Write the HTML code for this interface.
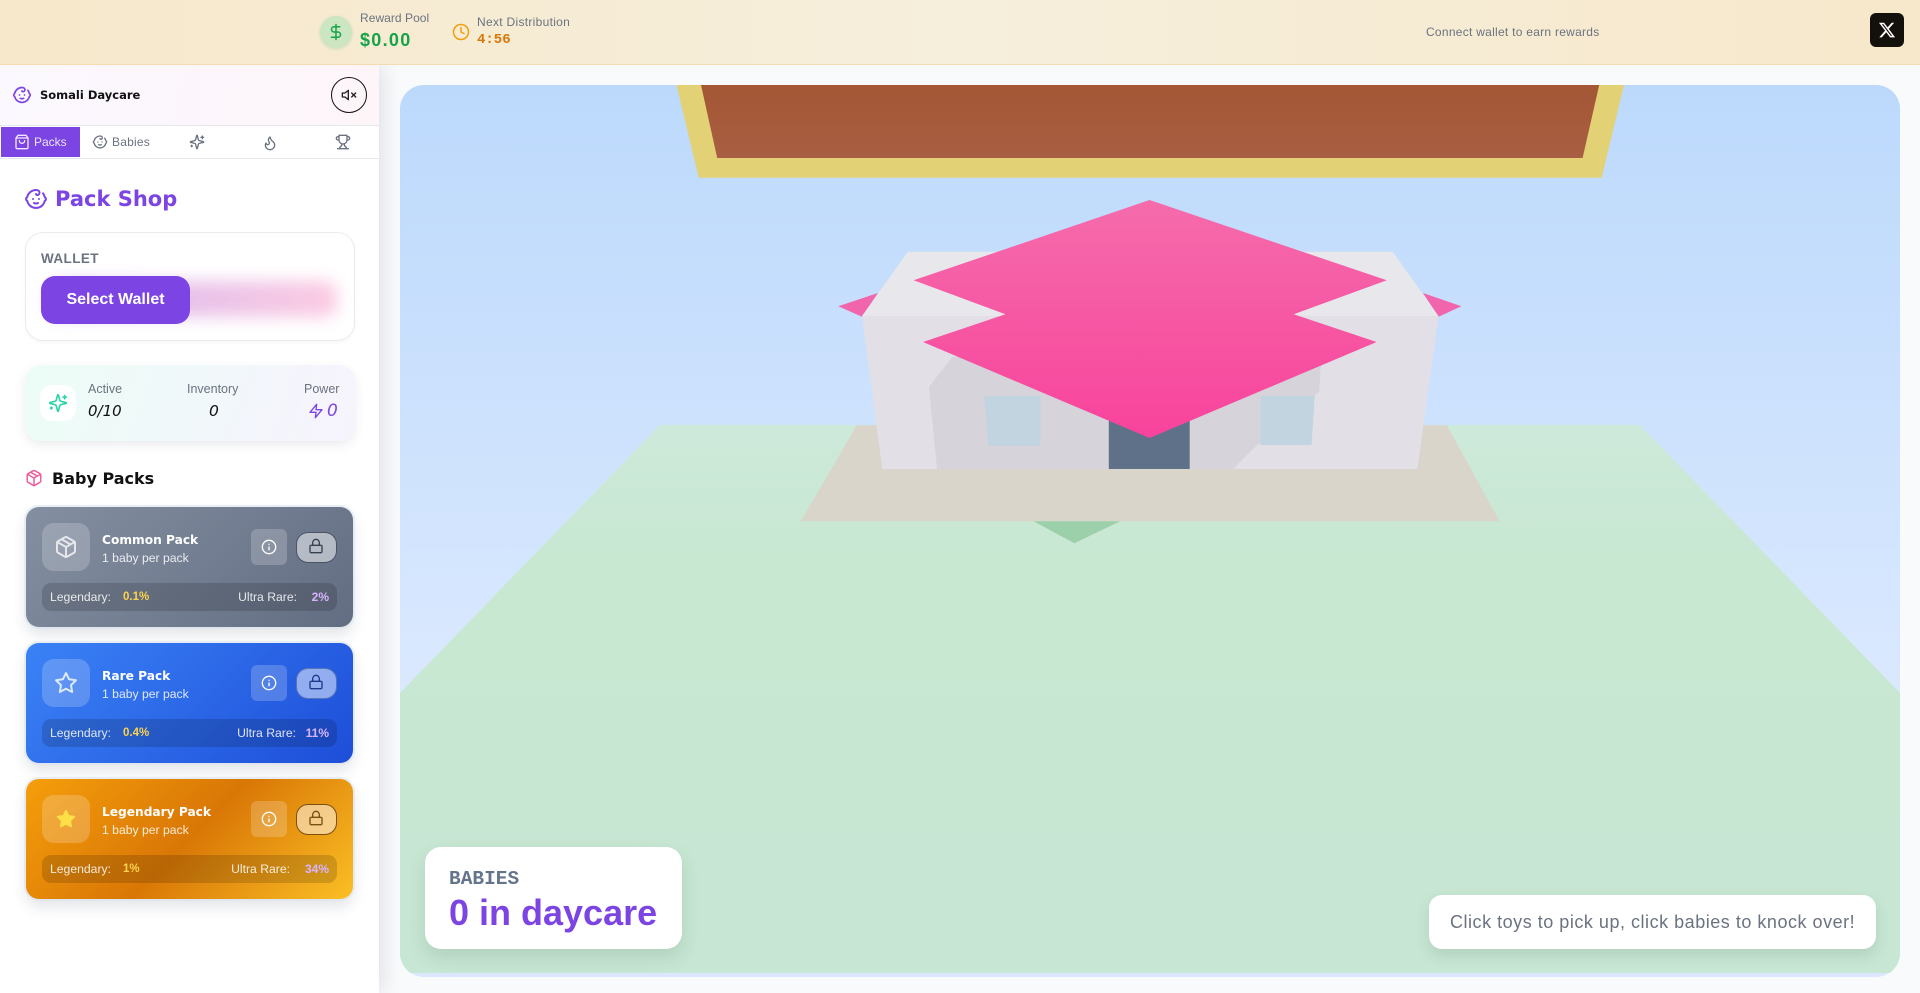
<!DOCTYPE html>
<html><head><meta charset="utf-8"><title>Somali Daycare</title>
<style>
*{box-sizing:border-box;margin:0;padding:0}
html,body{width:1920px;height:993px;overflow:hidden;background:#f8fafc;font-family:"Liberation Sans",sans-serif}
.a{position:absolute;white-space:nowrap}
svg.i{position:absolute;fill:none;stroke:currentColor;stroke-width:2;stroke-linecap:round;stroke-linejoin:round}
.h{font-family:"DejaVu Sans",sans-serif}
#top{left:0;top:0;width:1920px;height:65px;z-index:5;background:linear-gradient(90deg,#f7e8cb,#f6efdc 50%,#f7e8cb);border-bottom:1px solid #f4dcb0}
#side{left:0;top:65px;width:379px;height:928px;z-index:3;background:#fff;box-shadow:0 0 22px rgba(30,40,60,.16)}
#scene{left:400px;top:85px;width:1500px;height:892px;border-radius:24px;overflow:hidden;background:#dbe7ff}
.card{left:26px;width:327px;height:120px;border-radius:13px;box-shadow:0 0 0 2px rgba(220,228,240,.6),0 8px 14px rgba(60,70,90,.14)}
.ib{left:16px;top:16px;width:48px;height:48px;border-radius:12px;background:rgba(255,255,255,.2)}
.tt{left:76px;top:25px;font-size:12.2px;font-weight:700;color:#fff;line-height:16px}
.st{left:76px;top:44px;font-size:12.2px;color:rgba(255,255,255,.85);line-height:15px}
.inf{left:225px;top:22px;width:36px;height:36px;border-radius:6px;background:rgba(255,255,255,.2)}
.lk{left:270px;top:25px;width:41px;height:31px;border-radius:12px;background:rgba(255,255,255,.5);border:1px solid rgba(30,40,60,.7)}
.bar{left:16px;top:76px;width:295px;height:28px;border-radius:9px;background:rgba(0,0,0,.15);color:rgba(255,255,255,.85);font-size:12.2px;line-height:28px}
.y{color:#fcd34d;font-weight:700;font-size:11.5px}.p{color:#d8b4fe;font-weight:700;font-size:12px}
</style></head><body>
<svg width="0" height="0" style="position:absolute"><defs>
<symbol id="baby" viewBox="0 0 24 24"><path d="M9 12h.01"/><path d="M15 12h.01"/><path d="M10 16c.5.3 1.2.5 2 .5s1.5-.2 2-.5"/><path d="M19 6.3a9 9 0 0 1 1.8 3.9 2 2 0 0 1 0 3.6 9 9 0 0 1-17.6 0 2 2 0 0 1 0-3.6A9 9 0 0 1 12 3c2 0 3.5 1.1 3.5 2.5s-.9 2.5-2 2.5c-.8 0-1.5-.4-1.5-1"/></symbol>
<symbol id="bag" viewBox="0 0 24 24"><path d="M6 2 3 6v14a2 2 0 0 0 2 2h14a2 2 0 0 0 2-2V6l-3-4Z"/><path d="M3 6h18"/><path d="M16 10a4 4 0 0 1-8 0"/></symbol>
<symbol id="spark" viewBox="0 0 24 24"><path d="M9.937 15.5A2 2 0 0 0 8.5 14.063l-6.135-1.582a.5.5 0 0 1 0-.962L8.5 9.936A2 2 0 0 0 9.937 8.5l1.582-6.135a.5.5 0 0 1 .963 0L14.063 8.5A2 2 0 0 0 15.5 9.937l6.135 1.581a.5.5 0 0 1 0 .964L15.5 14.063a2 2 0 0 0-1.437 1.437l-1.582 6.135a.5.5 0 0 1-.963 0z"/><path d="M20 3v4"/><path d="M22 5h-4"/><path d="M4 17v2"/><path d="M5 18H3"/></symbol>
<symbol id="flame" viewBox="0 0 24 24"><path d="M8.5 14.5A2.5 2.5 0 0 0 11 12c0-1.38-.5-2-1-3-1.072-2.143-.224-4.054 2-6 .5 2.5 2 4.9 4 6.5 2 1.6 3 3.5 3 5.5a7 7 0 1 1-14 0c0-1.153.433-2.294 1-3a2.5 2.5 0 0 0 2.5 2.5z"/></symbol>
<symbol id="trophy" viewBox="0 0 24 24"><path d="M6 9H4.5a2.5 2.5 0 0 1 0-5H6"/><path d="M18 9h1.5a2.5 2.5 0 0 0 0-5H18"/><path d="M4 22h16"/><path d="M10 14.66V17c0 .55-.47.98-.97 1.21C7.85 18.75 7 20.24 7 22"/><path d="M14 14.66V17c0 .55.47.98.97 1.21C16.15 18.75 17 20.24 17 22"/><path d="M18 2H6v7a6 6 0 0 0 12 0V2Z"/></symbol>
<symbol id="pkg" viewBox="0 0 24 24"><path d="m7.5 4.27 9 5.15"/><path d="M21 8a2 2 0 0 0-1-1.73l-7-4a2 2 0 0 0-2 0l-7 4A2 2 0 0 0 3 8v8a2 2 0 0 0 1 1.73l7 4a2 2 0 0 0 2 0l7-4A2 2 0 0 0 21 16Z"/><path d="m3.3 7 8.7 5 8.7-5"/><path d="M12 22V12"/></symbol>
<symbol id="star" viewBox="0 0 24 24"><polygon points="12 2 15.09 8.26 22 9.27 17 14.14 18.18 21.02 12 17.77 5.82 21.02 7 14.14 2 9.27 8.91 8.26 12 2"/></symbol>
<symbol id="info" viewBox="0 0 24 24"><circle cx="12" cy="12" r="10"/><path d="M12 16v-4"/><path d="M12 8h.01"/></symbol>
<symbol id="lock" viewBox="0 0 24 24"><rect x="3" y="11" width="18" height="11" rx="2"/><path d="M7 11V7a5 5 0 0 1 10 0v4"/></symbol>
</defs></svg>

<div class="a" id="top">
  <div class="a" style="left:320px;top:16px;width:32px;height:32px;border-radius:50%;background:#cbe6c0;box-shadow:0 1px 3px rgba(22,163,74,.2)"></div>
  <svg class="i" style="left:327px;top:23px;color:#16a34a" width="18" height="18" viewBox="0 0 24 24"><line x1="12" y1="2" x2="12" y2="22"/><path d="M17 5H9.5a3.5 3.5 0 0 0 0 7h5a3.5 3.5 0 0 1 0 7H6"/></svg>
  <div class="a" style="left:360px;top:11px;font-size:12px;line-height:15px;color:#6b7280;letter-spacing:.05px">Reward Pool</div>
  <div class="a" style="left:360px;top:29px;font-size:18px;line-height:22px;font-weight:700;color:#16a34a;letter-spacing:1.3px">$0.00</div>
  <svg class="i" style="left:452px;top:23px;color:#f59e0b" width="18" height="18" viewBox="0 0 24 24"><circle cx="12" cy="12" r="10"/><polyline points="12 6 12 12 16 14"/></svg>
  <div class="a" style="left:477px;top:15px;font-size:12px;line-height:15px;color:#6b7280;letter-spacing:.3px">Next Distribution</div>
  <div class="a" style="left:477px;top:32px;font-family:'Liberation Mono',monospace;font-size:14px;line-height:17px;font-weight:700;color:#d97706">4:56</div>
  <div class="a" style="left:1426px;top:25px;font-size:12px;line-height:15px;color:#6b7280;letter-spacing:.27px">Connect wallet to earn rewards</div>
  <div class="a" style="left:1870px;top:13px;width:34px;height:34px;border-radius:6px;background:#14110c"></div>
  <svg style="position:absolute;left:1878px;top:21px" width="18" height="18" viewBox="0 0 24 24" fill="#fff"><path d="M18.244 2.25h3.308l-7.227 8.26 8.502 11.24H16.17l-5.214-6.817L4.99 21.75H1.68l7.73-8.835L1.254 2.25H8.08l4.713 6.231zm-1.161 17.52h1.833L7.084 4.126H5.117z"/></svg>
</div>

<div class="a" id="scene">
<svg width="1500" height="892" viewBox="400 85 1500 892" style="display:block">
<defs>
<linearGradient id="sky" x1="0" y1="85" x2="0" y2="700" gradientUnits="userSpaceOnUse"><stop offset="0" stop-color="#bcd9fc"/><stop offset="1" stop-color="#dbe9fe"/></linearGradient>
<linearGradient id="gr" x1="0" y1="425" x2="0" y2="973" gradientUnits="userSpaceOnUse"><stop offset="0" stop-color="#cde9da"/><stop offset=".25" stop-color="#c8e8d2"/><stop offset="1" stop-color="#c7e6d4"/></linearGradient>
<linearGradient id="rf" x1="0" y1="200" x2="0" y2="438" gradientUnits="userSpaceOnUse"><stop offset="0" stop-color="#f56cab"/><stop offset="1" stop-color="#f8439c"/></linearGradient>
<linearGradient id="br" x1="0" y1="85" x2="0" y2="158" gradientUnits="userSpaceOnUse"><stop offset="0" stop-color="#a45735"/><stop offset="1" stop-color="#a85e42"/></linearGradient>
</defs>
<rect x="400" y="85" width="1500" height="888" fill="url(#sky)"/>
<polygon points="660,425 1640,425 1900,693 1900,973 400,973 400,693" fill="url(#gr)"/>
<polygon points="676.5,85 1624,85 1601.7,177.7 698.7,177.7" fill="#e3d175"/>
<polygon points="701,85 1599.2,85 1582.6,158 717.2,158" fill="url(#br)"/>
<polygon points="856.8,425.3 1446.8,425.3 1499.7,521.3 800.7,521.3" fill="#d9d5ca"/>
<polygon points="1033.5,521.3 1120.2,521.3 1074.3,543.3" fill="#9bd0ab"/>
<polygon points="838.3,306.3 877.9,293 862,316.7" fill="#f065ab"/>
<polygon points="1461.4,306.3 1423,293 1438.5,316.7" fill="#f065ab"/>
<polygon points="907.9,251.7 1392.6,251.7 1438.5,316 862,316" fill="#e8e7ec"/>
<polygon points="862,316 1438.5,316 1417.4,469 882.3,469" fill="#e2e0e6"/>
<polygon points="952.5,356.7 929,386.7 937,469 1233,469 1255.4,446.7 1319.2,391.7 1321,363" fill="#d6d3da"/>
<polygon points="984.4,396 1040.5,396 1040.5,446 988.2,446" fill="#c1d4df"/>
<polygon points="1260.5,396 1314.7,396 1311.6,445 1260.5,445" fill="#c1d4df"/>
<rect x="1108.8" y="415" width="80.9" height="54" fill="#5f7188"/>
<polygon points="1149.6,200 1386.8,280.3 1293.7,314.3 1376.6,342 1149.6,438 923,342 1005.4,314.3 913.6,280.3" fill="url(#rf)"/>
</svg>
<div class="a" style="left:25px;top:762px;width:257px;height:102px;border-radius:16px;background:#fff;box-shadow:0 8px 18px rgba(40,80,60,.14)"></div>
<div class="a" style="left:49px;top:784px;font-family:'Liberation Mono',monospace;font-size:19.5px;line-height:21px;font-weight:700;color:#64748b">BABIES</div>
<div class="a" style="left:49px;top:807px;font-size:36px;line-height:42px;font-weight:700;color:#7c44e3;letter-spacing:0">0 in daycare</div>
<div class="a" style="left:1029px;top:810px;width:447px;height:54px;border-radius:13px;background:#fff;box-shadow:0 6px 14px rgba(40,80,60,.14)"></div>
<div class="a" style="left:1050px;top:826px;font-size:18px;line-height:22px;color:#6b7280;letter-spacing:.52px">Click toys to pick up, click babies to knock over!</div>
</div>

<div class="a" id="side">
  <div class="a" style="left:0;top:0;width:379px;height:61px;background:linear-gradient(100deg,#fbf8ff,#fef5f9);border-bottom:1px solid #e5e7eb"></div>
  <svg class="i" style="left:12px;top:20px;color:#7c44e3" width="20" height="20"><use href="#baby"/></svg>
  <div class="a h" style="left:40px;top:22px;font-size:11.5px;line-height:16px;font-weight:700;color:#111">Somali Daycare</div>
  <div class="a" style="left:331px;top:12px;width:36px;height:36px;border-radius:50%;border:1px solid #111"></div>
  <svg class="i" style="left:341px;top:22px;color:#222" width="16" height="16" viewBox="0 0 24 24"><polygon points="11 5 6 9 2 9 2 15 6 15 11 19 11 5"/><line x1="22" y1="9" x2="16" y2="15"/><line x1="16" y1="9" x2="22" y2="15"/></svg>
  <div class="a" style="left:0;top:61px;width:379px;height:33px;border-bottom:1px solid #e5e7eb;background:#fff"></div>
  <div class="a" style="left:1px;top:62px;width:79px;height:30px;background:#7c44e3"></div>
  <svg class="i" style="left:14px;top:69px;color:#f3e8ff" width="16" height="16"><use href="#bag"/></svg>
  <div class="a" style="left:34px;top:69px;font-size:12px;line-height:16px;color:#ede4fb">Packs</div>
  <svg class="i" style="left:92px;top:69px;color:#6b7280" width="16" height="16"><use href="#baby"/></svg>
  <div class="a" style="left:112px;top:69px;font-size:12px;line-height:16px;color:#6b7280;letter-spacing:.2px">Babies</div>
  <svg class="i" style="left:189px;top:69px;color:#6b7280" width="16" height="16"><use href="#spark"/></svg>
  <svg class="i" style="left:262px;top:70px;color:#6b7280" width="16" height="16"><use href="#flame"/></svg>
  <svg class="i" style="left:335px;top:69px;color:#6b7280" width="16" height="16"><use href="#trophy"/></svg>

  <svg class="i" style="left:24px;top:122px;color:#7c44e3" width="24" height="24"><use href="#baby"/></svg>
  <div class="a h" style="left:55px;top:120px;font-size:21px;line-height:28px;font-weight:700;color:#7c44e3">Pack Shop</div>

  <div class="a" style="left:25px;top:167px;width:330px;height:109px;border-radius:18px;border:1px solid #e9ebef;background:#fff;box-shadow:0 2px 5px rgba(0,0,0,.03)"></div>
  <div class="a" style="left:41px;top:185px;font-size:13.5px;line-height:17px;font-weight:700;color:#6b7280;letter-spacing:.4px">WALLET</div>
  <div class="a" style="left:49px;top:216px;width:288px;height:36px;border-radius:12px;background:linear-gradient(90deg,#b98ae8,#f9a8cf);opacity:.6;filter:blur(8px)"></div>
  <div class="a" style="left:41px;top:211px;width:149px;height:48px;border-radius:14px;background:#7c44e3;color:#fff;font-size:16px;font-weight:700;text-align:center;line-height:48px">Select Wallet</div>

  <div class="a" style="left:25px;top:300px;width:330px;height:76px;border-radius:16px;background:linear-gradient(110deg,#ecfdf6,#f2f7fb 60%,#f7f3fd);box-shadow:0 4px 10px rgba(60,70,90,.1)"></div>
  <div class="a" style="left:40px;top:320px;width:36px;height:36px;border-radius:12px;background:#fff"></div>
  <svg class="i" style="left:48px;top:328px;color:#2dd4aa" width="20" height="20"><use href="#spark"/></svg>
  <div class="a" style="left:88px;top:317px;font-size:12.5px;line-height:15px;color:#6b7280">Active</div>
  <div class="a h" style="left:88px;top:336px;font-size:15px;line-height:20px;font-style:italic;color:#111">0/10</div>
  <div class="a" style="left:187px;top:317px;font-size:12.5px;line-height:15px;color:#6b7280">Inventory</div>
  <div class="a h" style="left:209px;top:336px;font-size:15.5px;line-height:20px;font-style:italic;color:#111">0</div>
  <div class="a" style="left:304px;top:317px;font-size:12.5px;line-height:15px;color:#6b7280">Power</div>
  <svg class="i" style="left:308px;top:338px;color:#7c44e3" width="16" height="16" viewBox="0 0 24 24"><polygon points="13 2 3 14 12 14 11 22 21 10 12 10 13 2"/></svg>
  <div class="a h" style="left:327px;top:336px;font-size:17px;line-height:20px;font-style:italic;color:#7c44e3">0</div>

  <svg class="i" style="left:25px;top:404px;color:#ec5f9d" width="18" height="18"><use href="#pkg"/></svg>
  <div class="a h" style="left:52px;top:403px;font-size:16px;line-height:22px;font-weight:700;color:#111">Baby Packs</div>

  <div class="a card" style="top:442px;background:linear-gradient(135deg,#848fa1,#626d82)">
    <div class="a ib"></div><svg class="i" style="left:28px;top:28px;color:#e5e7eb" width="24" height="24"><use href="#pkg"/></svg>
    <div class="a tt h">Common Pack</div><div class="a st">1 baby per pack</div>
    <div class="a inf"></div><svg class="i" style="left:235px;top:32px;color:#fff" width="16" height="16"><use href="#info"/></svg>
    <div class="a lk"></div><svg class="i" style="left:282px;top:31px;color:#374151" width="16" height="16"><use href="#lock"/></svg>
    <div class="a bar"><span class="a" style="left:8px">Legendary:</span><span class="a y" style="left:81px">0.1%</span><span class="a" style="right:40px">Ultra Rare:</span><span class="a p" style="right:8px">2%</span></div>
  </div>
  <div class="a card" style="top:578px;background:linear-gradient(135deg,#3b82f6,#1d4ed8)">
    <div class="a ib"></div><svg class="i" style="left:28px;top:28px;color:#dbeafe" width="24" height="24"><use href="#star"/></svg>
    <div class="a tt h">Rare Pack</div><div class="a st">1 baby per pack</div>
    <div class="a inf"></div><svg class="i" style="left:235px;top:32px;color:#fff" width="16" height="16"><use href="#info"/></svg>
    <div class="a lk" style="border-color:rgba(30,60,130,.5)"></div><svg class="i" style="left:282px;top:31px;color:#1e3a8a" width="16" height="16"><use href="#lock"/></svg>
    <div class="a bar"><span class="a" style="left:8px">Legendary:</span><span class="a y" style="left:81px">0.4%</span><span class="a" style="right:41px">Ultra Rare:</span><span class="a p" style="right:8px">11%</span></div>
  </div>
  <div class="a card" style="top:714px;background:linear-gradient(135deg,#f59e0b,#d97706 50%,#fbbf24)">
    <div class="a ib"></div><svg class="i" style="left:30px;top:30px;color:#fde047;fill:#fde047" width="20" height="20"><use href="#star"/></svg>
    <div class="a tt h">Legendary Pack</div><div class="a st">1 baby per pack</div>
    <div class="a inf"></div><svg class="i" style="left:235px;top:32px;color:#fff" width="16" height="16"><use href="#info"/></svg>
    <div class="a lk" style="border-color:#7c4f12"></div><svg class="i" style="left:282px;top:31px;color:#7c4f12" width="16" height="16"><use href="#lock"/></svg>
    <div class="a bar"><span class="a" style="left:8px">Legendary:</span><span class="a y" style="left:81px">1%</span><span class="a" style="right:47px">Ultra Rare:</span><span class="a p" style="right:8px">34%</span></div>
  </div>
</div>
</body></html>
